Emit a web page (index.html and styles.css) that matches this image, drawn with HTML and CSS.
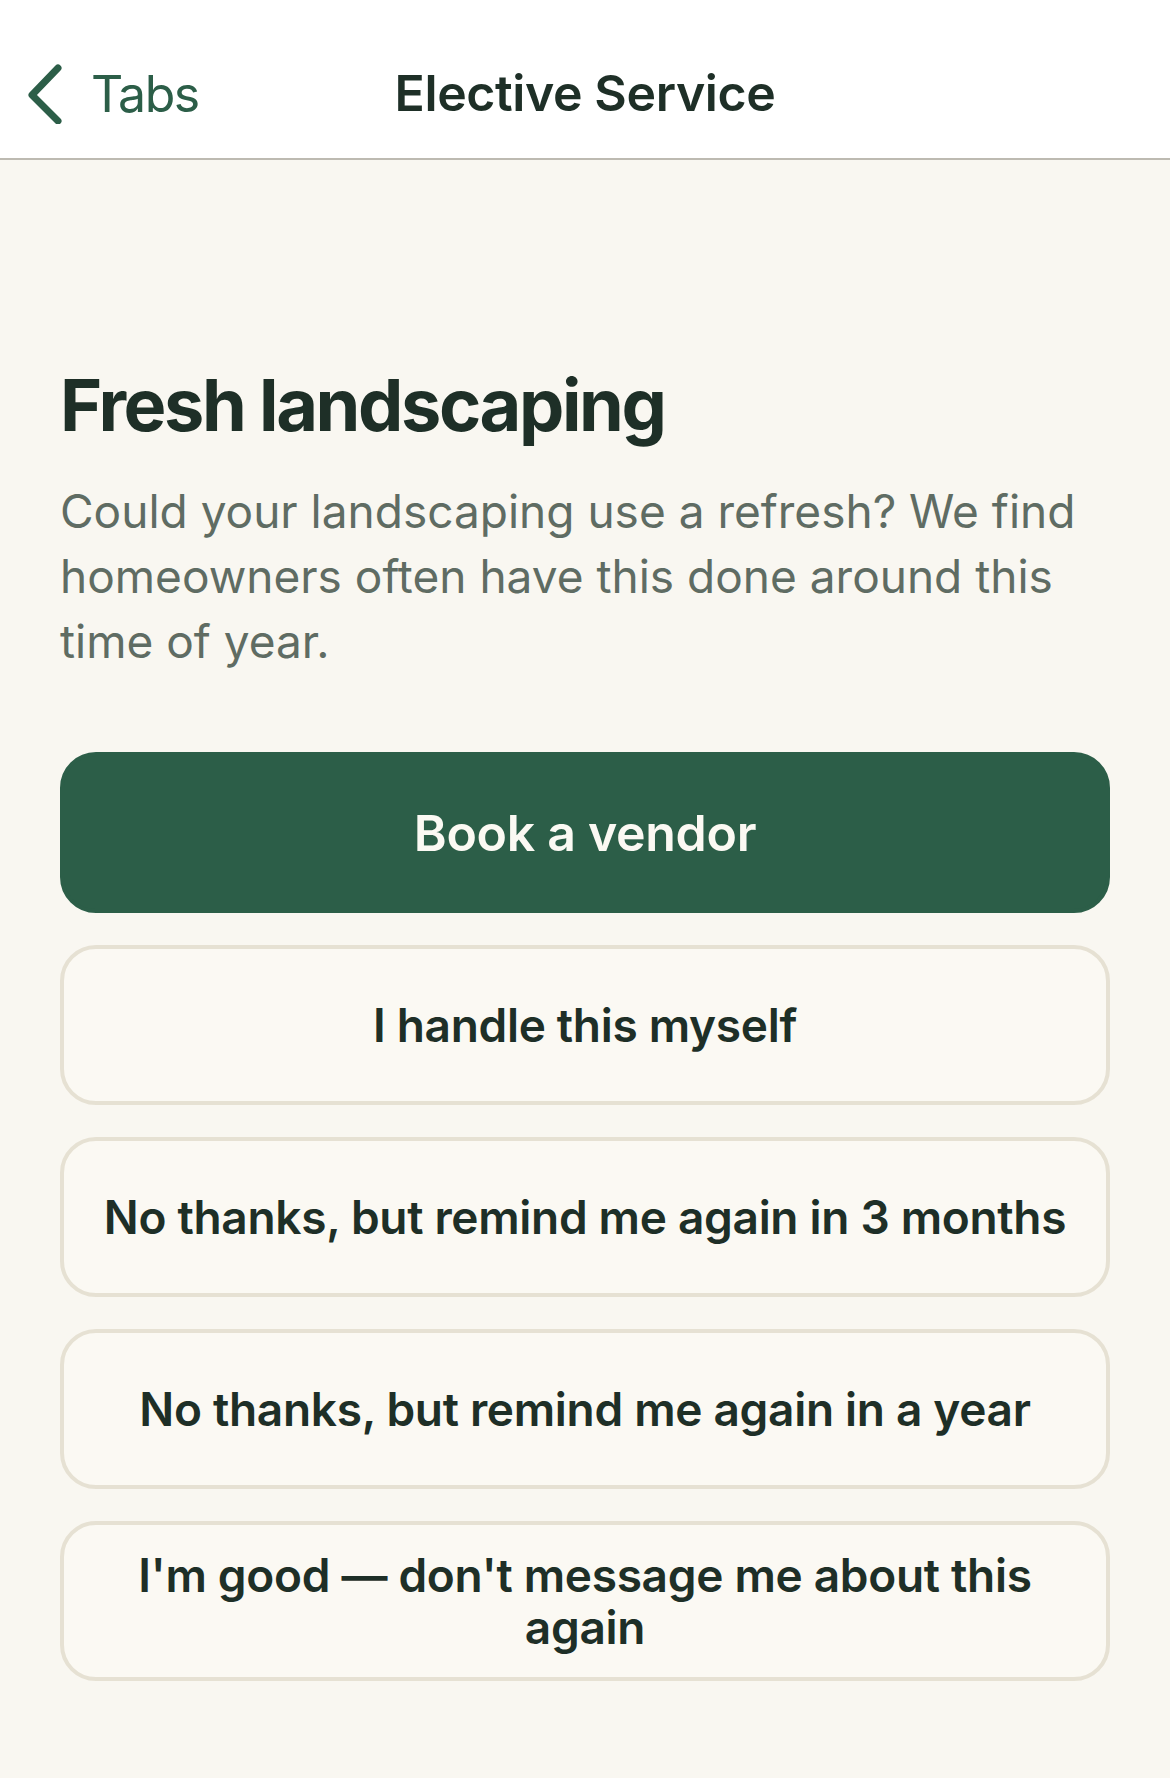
FILE: index.html
```html
<!DOCTYPE html>
<html lang="en">
<head>
    <meta charset="UTF-8">
    <meta name="viewport" content="width=device-width, initial-scale=1.0">
    <title>Elective Service</title>
    <link rel="stylesheet" href="styles.css">
</head>
<body>
    <header class="navbar">
        <a class="back" href="#">
            <svg class="back-icon" width="40" height="60" viewBox="0 0 40 60" aria-hidden="true">
                <polyline points="34,4 8,31 34,57" fill="none" stroke="#2c5e48" stroke-width="7" stroke-linecap="round" stroke-linejoin="round"/>
            </svg>
            <span>Tabs</span>
        </a>
        <h1 class="nav-title">Elective Service</h1>
    </header>
    <main class="content">
        <h2 class="title">Fresh landscaping</h2>
        <p class="intro">Could your landscaping use a refresh? We find homeowners often have this done around this time of year.</p>
        <div class="actions">
            <button class="btn primary">Book a vendor</button>
            <button class="btn">I handle this myself</button>
            <button class="btn">No thanks, but remind me again in 3 months</button>
            <button class="btn">No thanks, but remind me again in a year</button>
            <button class="btn">I'm good — don't message me about this again</button>
        </div>
    </main>
</body>
</html>
```

FILE: styles.css
```css
/* Elective service prompt */
body {
    font-family: Inter, "Noto Sans", sans-serif;
    margin: 0;
    padding: 0;
    background-color: #f9f7f1;
    color: #1e2f27;
}

.navbar {
    position: relative;
    height: 160px;
    box-sizing: border-box;
    padding-top: 28px;
    background: #fff;
    border-bottom: 2px solid #bdbab1;
    display: flex;
    align-items: center;
    justify-content: center;
}

.back {
    position: absolute;
    left: 24px;
    top: 64px;
    display: flex;
    align-items: center;
    gap: 27px;
    text-decoration: none;
    color: #2c5e48;
    font-size: 50px;
    letter-spacing: -1.5px;
}

.back-icon {
    display: block;
}

.nav-title {
    margin: 0;
    font-size: 50px;
    font-weight: 600;
    letter-spacing: -0.4px;
    color: #1e2f27;
}

.content {
    padding: 202px 60px 60px;
}

.title {
    margin: 0;
    font-size: 72px;
    line-height: 86px;
    font-weight: 700;
    letter-spacing: -2.4px;
}

.intro {
    margin: 31px 0 0;
    font-size: 46px;
    line-height: 65px;
    color: #5f6c63;
    letter-spacing: 0;
}

.actions {
    margin-top: 78px;
    display: flex;
    flex-direction: column;
    gap: 32px;
}

.btn {
    min-height: 160px;
    box-sizing: border-box;
    padding: 0 30px;
    border: 4px solid #e6e1d3;
    border-radius: 36px;
    background: #fbf9f3;
    color: #1e2f27;
    font-family: inherit;
    font-size: 46px;
    line-height: 52px;
    font-weight: 600;
    letter-spacing: -0.3px;
    text-align: center;
    cursor: pointer;
}

.btn.primary {
    min-height: 161px;
    background: #2c5e48;
    border-color: #2c5e48;
    color: #fbf9f3;
    font-size: 50px;
    letter-spacing: -0.3px;
}
```
